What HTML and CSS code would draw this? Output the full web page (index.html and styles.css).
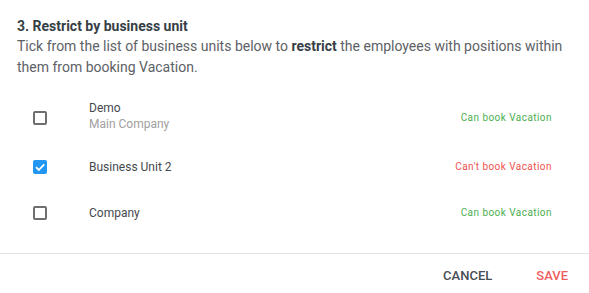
FILE: index.html
```html
<!DOCTYPE html>
<html>
<head>
<meta charset="utf-8">
<link rel="stylesheet" href="styles.css">
</head>
<body>
<div class="dialog">
  <div class="content">
    <h3 class="title">3. Restrict by business unit</h3>
    <p class="desc">Tick from the list of business units below to <strong>restrict</strong> the employees with positions within them from booking Vacation.</p>
    <ul class="units">
      <li class="unit two-line">
        <span class="cb"></span>
        <div class="unit-text">
          <div class="name">Demo</div>
          <div class="sub">Main Company</div>
        </div>
        <span class="status can">Can book Vacation</span>
      </li>
      <li class="unit">
        <span class="cb checked"><svg viewBox="0 0 14 14" width="14" height="14"><path d="M3 7.2 L5.8 10 L11.2 4.4" fill="none" stroke="#fff" stroke-width="1.8"/></svg></span>
        <div class="unit-text">
          <div class="name">Business Unit 2</div>
        </div>
        <span class="status cant">Can't book Vacation</span>
      </li>
      <li class="unit">
        <span class="cb"></span>
        <div class="unit-text">
          <div class="name">Company</div>
        </div>
        <span class="status can">Can book Vacation</span>
      </li>
    </ul>
  </div>
  <div class="actions">
    <button class="btn cancel">CANCEL</button>
    <button class="btn save">SAVE</button>
  </div>
</div>
</body>
</html>
```

FILE: styles.css
```css
html, body {
  margin: 0;
  padding: 0;
  background: #fff;
  font-family: Roboto, "Noto Sans", Arial, sans-serif;
}
.dialog {
  width: 589px;
}
.content {
  padding: 16px 17px 17px 17px;
}
.title {
  margin: 0;
  font-size: 14px;
  line-height: 20px;
  font-weight: 700;
  color: #363f46;
}
.desc {
  margin: 0;
  font-size: 14px;
  line-height: 21px;
  color: #5d6166;
}
.desc strong {
  color: #363f46;
  font-weight: 700;
}
.units {
  list-style: none;
  margin: 14px 0 0 0;
  padding: 0;
}
.unit {
  display: flex;
  align-items: center;
  min-height: 46px;
  box-sizing: border-box;
}
.unit.two-line {
  padding: 8px 0;
}
.cb {
  flex: none;
  box-sizing: border-box;
  width: 14px;
  height: 14px;
  margin-left: 16px;
  border: 2px solid #6f6f6f;
  border-radius: 2px;
  display: flex;
  align-items: center;
  justify-content: center;
}
.cb.checked {
  background: #2196f3;
  border-color: #2196f3;
}
.cb svg {
  flex: none;
}
.unit-text {
  margin-left: 42px;
}
.two-line .unit-text {
  padding-bottom: 4px;
}
.name {
  font-size: 12px;
  line-height: 16px;
  color: #45494d;
}
.sub {
  font-size: 12px;
  line-height: 16px;
  color: #a0a0a0;
}
.status {
  margin-left: auto;
  margin-right: 20px;
  font-size: 10px;
  letter-spacing: 0.45px;
  line-height: 14px;
}
.status.can { color: #4caf50; }
.status.cant { color: #ef5350; }
.actions {
  border-top: 1px solid #e3e3e3;
  display: flex;
  justify-content: flex-end;
  gap: 20px;
  padding: 3px 9px 0 0;
}
.btn {
  background: none;
  border: none;
  height: 36px;
  padding: 0 12px;
  font-family: Roboto, Arial, sans-serif;
  font-size: 13px;
  font-weight: 500;
  cursor: pointer;
}
.btn.cancel { color: #474d52; }
.btn.save { color: #ef5f5f; }
```
